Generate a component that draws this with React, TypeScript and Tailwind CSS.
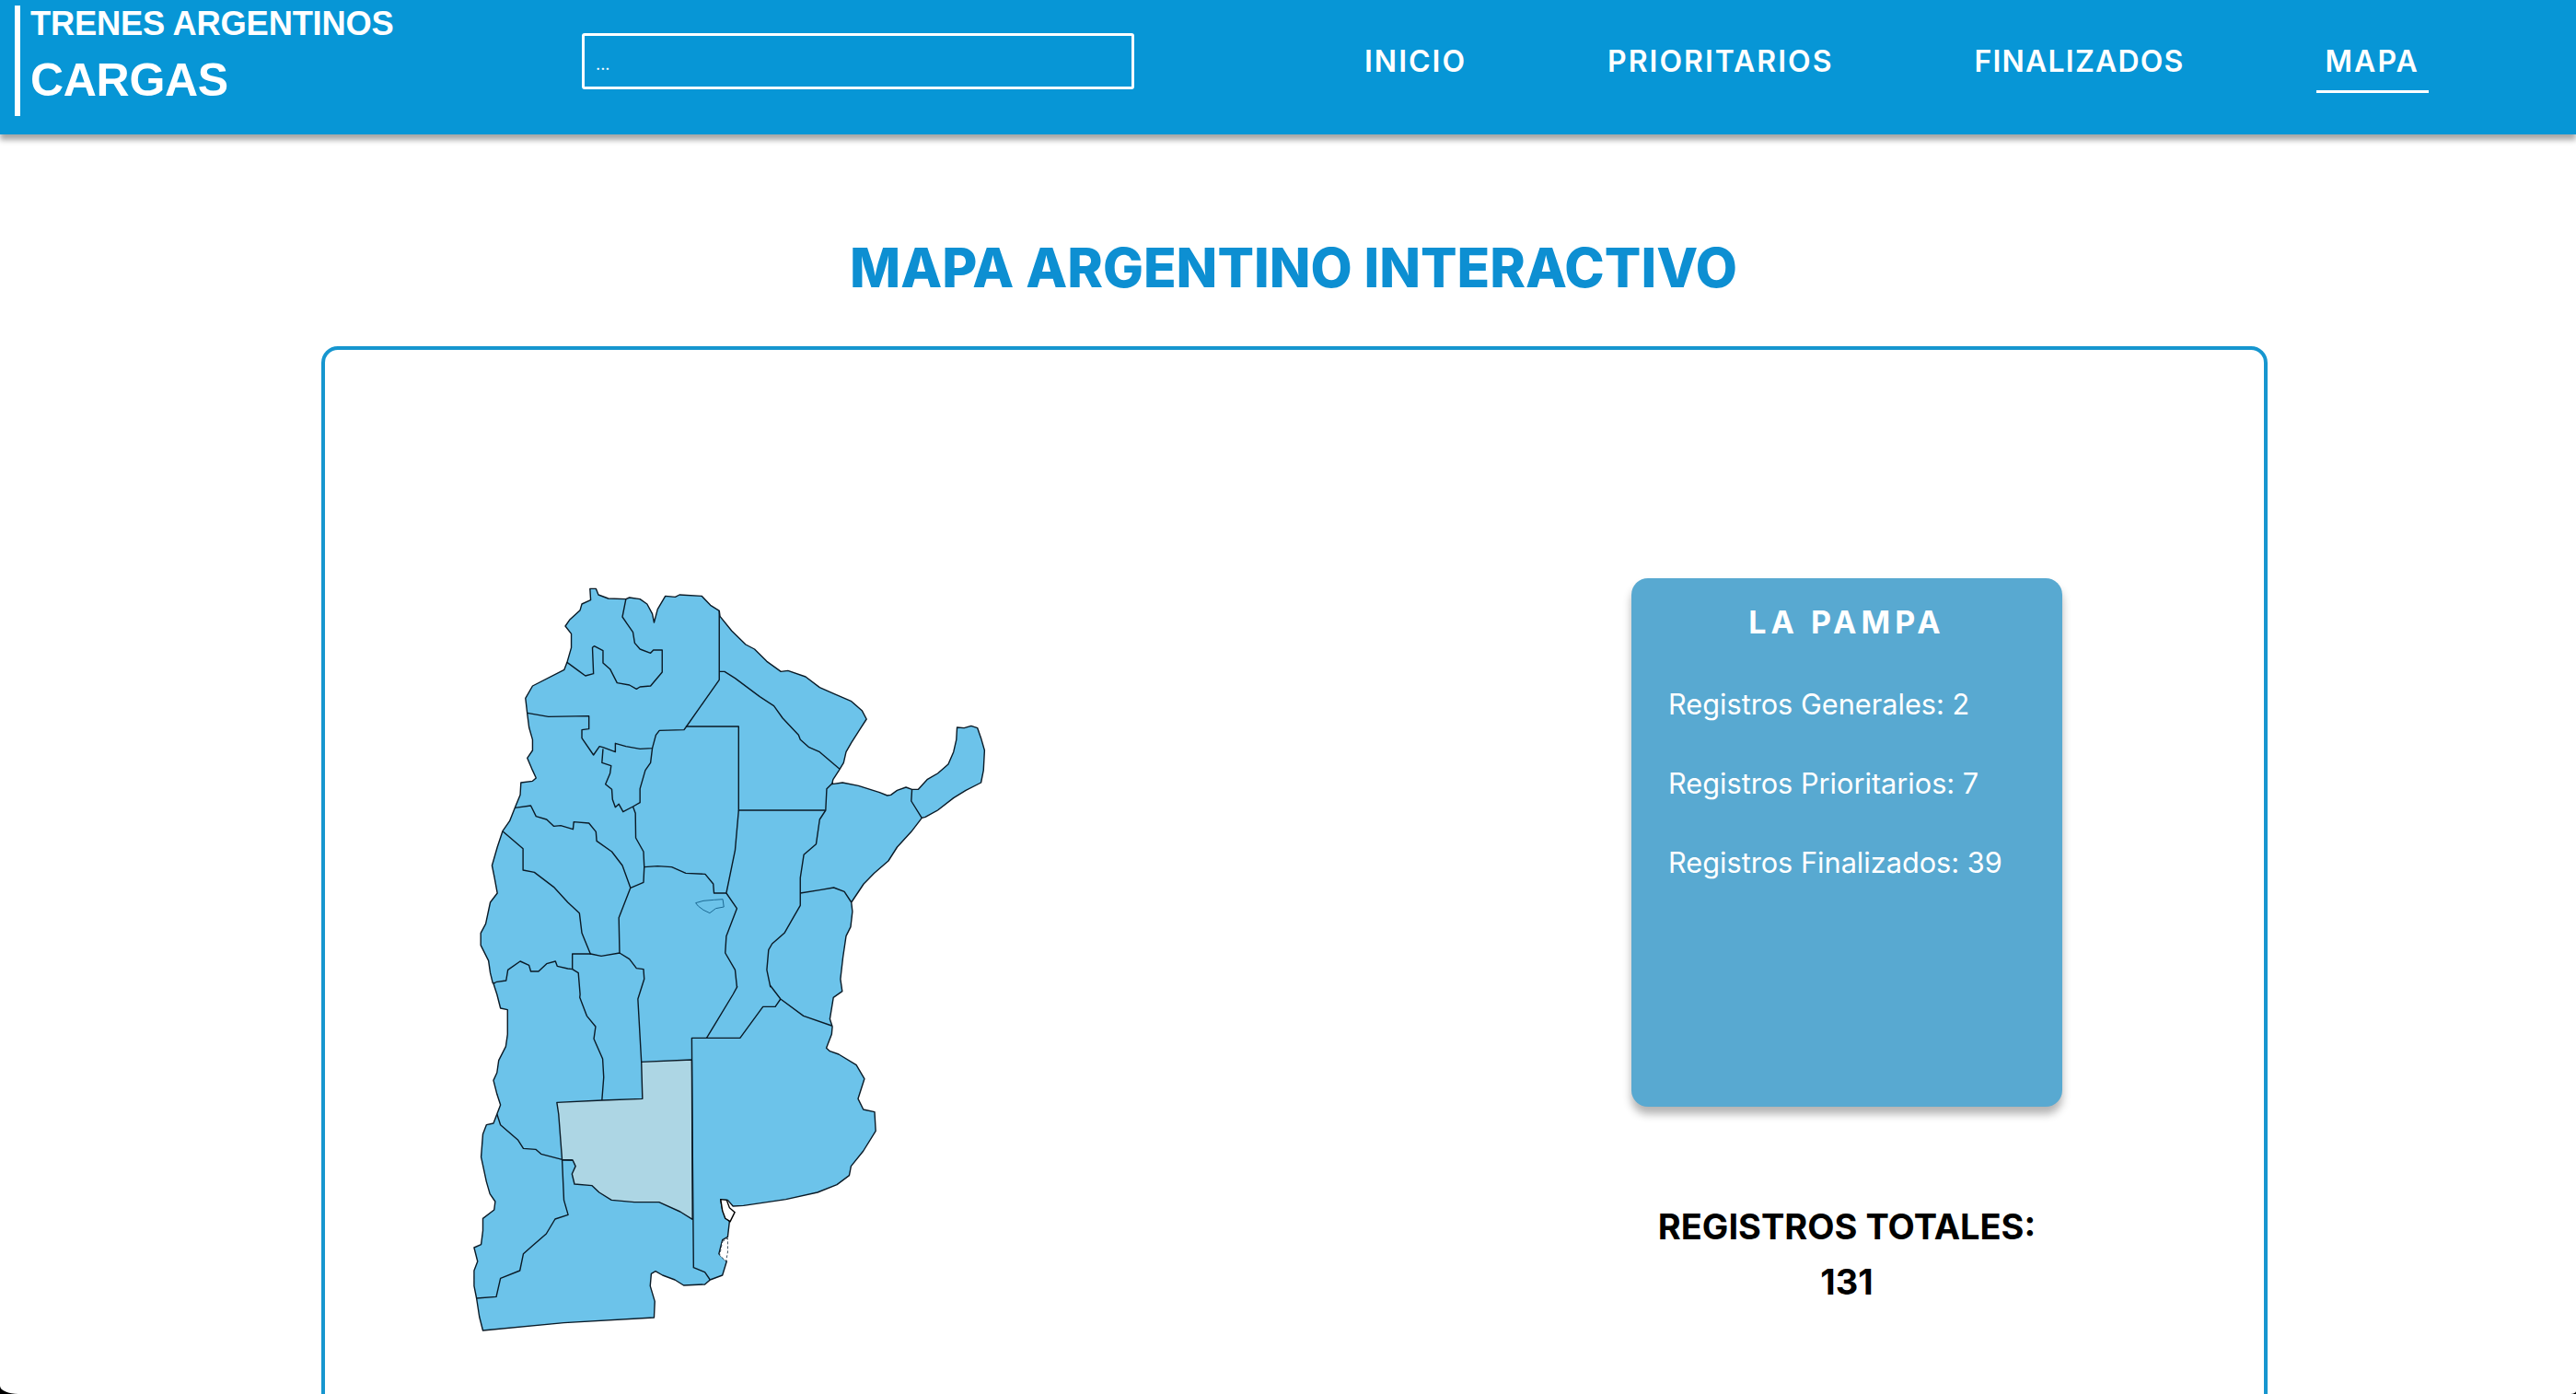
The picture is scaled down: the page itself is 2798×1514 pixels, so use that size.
type Pt = [number, number];

// the lower half of the map was traced from a second crop, shifted into the same coordinates
const low = (pts: Pt[]): Pt[] => pts.map(([x, y]) => [x - 26, y + 1260] as Pt);
const toPath = (pts: Pt[], close = false) =>
  "M" + pts.map(([x, y]) => `${x} ${y}`).join("L") + (close ? "Z" : "");

const outline: Pt[] = [
  [368, 58], [385, 58], [392, 78], [420, 90], [470, 92], [480, 87], [510, 92], [530, 108], [545, 140], [550, 168],
  [560, 125], [582, 82], [610, 85], [622, 78], [685, 82], [710, 112], [735, 130], [737, 148], [770, 195], [810, 240],
  [835, 255], [870, 295], [910, 328], [930, 325], [980, 345], [1020, 380], [1060, 400], [1110, 425], [1140, 455],
  [1153, 483], [1135, 515], [1110, 560], [1095, 590], [1088, 625], [1075, 650], [1058, 680], [1055, 695], [1085, 690],
  [1130, 700], [1190, 722], [1212, 732], [1222, 730], [1240, 715], [1265, 705], [1282, 712], [1300, 712], [1325, 680],
  [1355, 660], [1385, 630], [1400, 590], [1408, 550], [1410, 510], [1430, 512], [1450, 505], [1468, 512], [1478, 545],
  [1488, 585], [1485, 650], [1478, 690], [1435, 715], [1400, 740], [1355, 780], [1320, 802], [1310, 805], [1280, 850],
  [1240, 900], [1215, 945], [1175, 985], [1145, 1020], [1110, 1080], [1113, 1110], [1108, 1160], [1095, 1190],
  ...low([
    [1112, 0], [1105, 70], [1110, 110], [1085, 130], [1075, 200], [1082, 225], [1080, 250], [1065, 295], [1075, 305],
    [1100, 315], [1150, 350], [1173, 395], [1155, 460], [1170, 495], [1202, 503], [1205, 565], [1170, 630], [1135, 680],
    [1130, 710], [1095, 740], [1040, 765], [950, 788], [830, 808], [800, 810], [785, 790], [765, 790], [770, 820],
    [790, 860], [785, 910], [770, 920], [760, 965], [782, 990], [770, 1035], [735, 1050], [720, 1065], [660, 1068],
    [635, 1050], [600, 1035], [580, 1022], [568, 1030], [565, 1070], [578, 1120], [576, 1173], [320, 1190], [90, 1215],
    [80, 1170], [72, 1110], [65, 1070], [65, 1020], [75, 990], [65, 945], [85, 935], [90, 890], [90, 850], [122, 822],
    [125, 795], [110, 770], [100, 730], [85, 650], [90, 575], [100, 545], [120, 540], [130, 510], [140, 480], [130, 445],
    [120, 400], [130, 375], [135, 335], [155, 290], [160, 250], [160, 170], [140, 165], [130, 120], [120, 85], [125, 82],
  ]),
  [92, 1343], [85, 1310], [80, 1270], [58, 1220], [58, 1180], [72, 1150], [85, 1080], [105, 1050], [97, 1000], [90, 960],
  [105, 900], [120, 848], [140, 815], [155, 772], [170, 730], [172, 690], [205, 685], [215, 675], [205, 650], [190, 610],
  [205, 585], [205, 550], [195, 510], [190, 465], [185, 415], [205, 375], [295, 322], [303, 298], [315, 250], [315, 205],
  [298, 180], [310, 160], [340, 128], [345, 108], [370, 95],
];

const laPampa: Pt[] = low([
  [300, 472], [428, 465], [543, 460], [540, 340], [683, 333], [685, 853], [650, 828], [590, 797], [520, 797], [455, 790],
  [420, 765], [400, 743], [350, 738], [343, 705], [353, 680], [345, 660], [315, 660], [305, 510],
]);

const borders: Pt[][] = [
  // jujuy / salta
  [[470, 92], [460, 150], [475, 175], [490, 200], [495, 235], [510, 255], [540, 268], [548, 258], [573, 258], [573, 330],
   [540, 375], [510, 378], [500, 385], [480, 372], [445, 365], [425, 320], [405, 300], [405, 260], [380, 245], [375, 250],
   [378, 335], [355, 342], [335, 325], [303, 298]],
  [[735, 130], [735, 355], [640, 510]],
  [[735, 328], [750, 328], [780, 350], [815, 380], [850, 410], [890, 440], [915, 480], [960, 535], [965, 550], [990, 575],
   [1020, 590], [1076, 645]],
  [[640, 510], [635, 518], [565, 520], [555, 535], [545, 578], [510, 580], [470, 572], [440, 562], [440, 590], [405, 575],
   [395, 572], [378, 600], [345, 545], [345, 518], [365, 515], [365, 473], [250, 475], [190, 463]],
  [[640, 507], [790, 507], [790, 780], [1035, 780]],
  [[1058, 690], [1040, 710], [1037, 780], [1020, 810], [1010, 890], [975, 925], [965, 1000], [965, 1090], [945, 1130],
   [920, 1180], [885, 1215], [875, 1235], [870, 1300], [880, 1355],
   ...low([[905, 90], [935, 135], [1000, 190], [1080, 222]])],
  [[1282, 712], [1280, 750], [1310, 805]],
  [[965, 1050], [1020, 1040], [1060, 1032], [1090, 1045], [1110, 1080]],
  // tucuman
  [[405, 580], [402, 625], [428, 635], [425, 660], [412, 695], [430, 712], [432, 745], [440, 770], [450, 760], [462, 785],
   [490, 768], [510, 755], [510, 710], [525, 650], [540, 625], [545, 578]],
  [[155, 772], [200, 765], [215, 800], [245, 810], [265, 832], [285, 830], [320, 842], [322, 818], [365, 822], [385, 850],
   [387, 880], [430, 915], [460, 960], [483, 1033]],
  [[120, 848], [178, 905], [178, 975], [210, 982], [265, 1030], [305, 1080], [338, 1115], [345, 1180], [370, 1250]],
  [[490, 768], [497, 790], [498, 870], [520, 915], [522, 965], [560, 962], [600, 965], [640, 985], [695, 988], [718, 1020],
   [720, 1050], [755, 1050]],
  [[790, 780], [780, 910], [755, 1050], [785, 1100], [755, 1190], [752, 1245], [780, 1300], [785, 1355],
   ...low([[812, 95], [800, 120], [750, 215], [725, 262]])],
  [[522, 965], [520, 1015], [483, 1033], [450, 1130], [452, 1245]],
  // san luis
  [[318, 1298], [318, 1248], [370, 1248], [400, 1255], [452, 1245], [480, 1265], [500, 1295], [520, 1298],
   ...low([[548, 70], [530, 135], [540, 340]])],
  [[318, 1298], [335, 1310], [340, 1380], ...low([[365, 130], [385, 190], [410, 225], [405, 265], [430, 330], [433, 390], [428, 465]])],
  [[100, 1340], [130, 1335], [135, 1300], [170, 1272], [195, 1285], [200, 1305], [222, 1305], [245, 1280], [270, 1272],
   [275, 1288], [305, 1296], [318, 1298]],
  low([[130, 510], [140, 545], [190, 595], [205, 622], [240, 625], [255, 640], [315, 658], [345, 660]]),
  low([[315, 660], [320, 790], [332, 838], [295, 852], [270, 900], [230, 940], [205, 965], [195, 1020], [140, 1045], [128, 1105], [72, 1110]]),
  // buenos aires
  low([[935, 135], [920, 160], [885, 160], [820, 262], [683, 262], [685, 600], [688, 1010], [720, 1025], [735, 1050]]),
];

const ArgentinaMap = () => (
  <svg viewBox="0 0 1568 2700" preserveAspectRatio="none" className="w-[600px] h-[900px] shrink-0">
    <path d={toPath(outline, true)} fill="#6cc3ea" stroke="#0a1a26" strokeWidth="1.4" strokeLinejoin="round" vectorEffect="non-scaling-stroke" />
    <path d={toPath(laPampa, true)} fill="#add6e4" stroke="#0a1a26" strokeWidth="1.4" strokeLinejoin="round" vectorEffect="non-scaling-stroke" />
    {borders.map((b, i) => (
      <path key={i} d={toPath(b)} fill="none" stroke="#0a1a26" strokeWidth="1.4" strokeLinejoin="round" vectorEffect="non-scaling-stroke" />
    ))}
    {/* laguna en cordoba */}
    <path
      d={toPath([[668, 1082], [690, 1075], [720, 1072], [745, 1070], [748, 1095], [725, 1100], [708, 1115], [690, 1105], [675, 1092]], true)}
      fill="#6cc3ea"
      stroke="#1c6a94"
      strokeWidth="1"
      vectorEffect="non-scaling-stroke"
    />
    {/* islas de la costa */}
    <path
      d={toPath(low([[765, 788], [782, 790], [790, 815], [805, 830], [792, 860], [778, 850], [770, 825]]), true)}
      fill="#ffffff"
      stroke="#000000"
      strokeWidth="1.4"
      vectorEffect="non-scaling-stroke"
    />
    <path
      d={toPath(low([[770, 925], [785, 915], [785, 960], [780, 990], [762, 970]]), true)}
      fill="#ffffff"
      stroke="#10283a"
      strokeWidth="0.8"
      strokeDasharray="3 2"
      vectorEffect="non-scaling-stroke"
    />
  </svg>
);

const navItems = [
  { label: "INICIO", className: "px-[10px] h-[56px] leading-[44px] tracking-[2px]" },
  { label: "PRIORITARIOS", className: "px-[10px] h-[56px] leading-[44px] tracking-[2px]" },
  { label: "FINALIZADOS", className: "px-[10px] h-[56px] leading-[44px] tracking-[1.2px]" },
  { label: "MAPA", className: "px-[10px] h-[56px] leading-[44px] tracking-[2px] border-b-[3px] border-white" },
];

const Header = () => (
  <header className="relative z-10 h-[146px] shrink-0 bg-[#0796d6] shadow-[0_6px_6px_rgba(0,0,0,0.35)] flex items-start">
    <div className="ml-[16px] mt-[6px] h-[120px] w-[370px] border-l-[6px] border-white pl-[11px] font-['Liberation_Sans',sans-serif] font-bold text-white">
      <p className="text-[36.3px] leading-[40px] tracking-[-0.2px] whitespace-nowrap">TRENES ARGENTINOS</p>
      <p className="text-[50px] leading-[56px] mt-[13px] tracking-[-0.3px]">CARGAS</p>
    </div>
    <input
      placeholder="..."
      className="ml-[246px] mt-[36px] h-[61px] w-[600px] rounded-[3px] border-[3px] border-white bg-transparent px-[12px] pt-[6px] text-[18px] text-white placeholder:text-white outline-none"
    />
    <nav className="flex gap-[133px] ml-[240px] mt-[45px] font-['Inter',sans-serif] font-semibold text-[32px] text-white">
      {navItems.map((item) => (
        <a key={item.label} className={item.className}>
          {item.label}
        </a>
      ))}
    </nav>
  </header>
);

const stats = [
  "Registros Generales: 2",
  "Registros Prioritarios: 7",
  "Registros Finalizados: 39",
];

const ProvinceCard = () => (
  <div className="h-[574px] w-[468px] rounded-[18px] bg-[#58a9d1] shadow-[0_8px_10px_rgba(0,0,0,0.3)] pt-[26px] pl-[40px] text-white">
    <h3 className="-ml-[40px] text-center text-[34px] leading-[44px] font-bold tracking-[5px]">LA PAMPA</h3>
    <ul className="mt-[47px] flex flex-col gap-[46px] text-[30.7px] leading-[40px]">
      {stats.map((s) => (
        <li key={s} className="whitespace-nowrap">{s}</li>
      ))}
    </ul>
  </div>
);

export default function App() {
  return (
    <div className="h-[1514px] w-full overflow-hidden bg-black font-['Inter',sans-serif]">
      <div className="flex h-full flex-col overflow-hidden rounded-bl-[20px_9px] rounded-br-[6px_3px] bg-white">
        <Header />
        <main className="flex flex-col items-center">
          <h1 className="mt-[113px] ml-[12px] text-[58.5px] leading-[64px] font-extrabold text-[#0d8fd2] whitespace-nowrap">
            MAPA ARGENTINO INTERACTIVO
          </h1>
          <section className="mt-[53px] ml-[14px] flex h-[1300px] w-[2114px] rounded-[18px] border-[4px] border-[#1696cf] pl-[147px] pt-[240px]">
            <ArgentinaMap />
            <div className="ml-[672px] mt-[8px] flex w-[468px] flex-col items-center">
              <ProvinceCard />
              <p className="mt-[100px] text-center text-[38px] leading-[60px] font-bold text-black whitespace-nowrap">
                REGISTROS TOTALES:
                <br />
                131
              </p>
            </div>
          </section>
        </main>
      </div>
    </div>
  );
}
